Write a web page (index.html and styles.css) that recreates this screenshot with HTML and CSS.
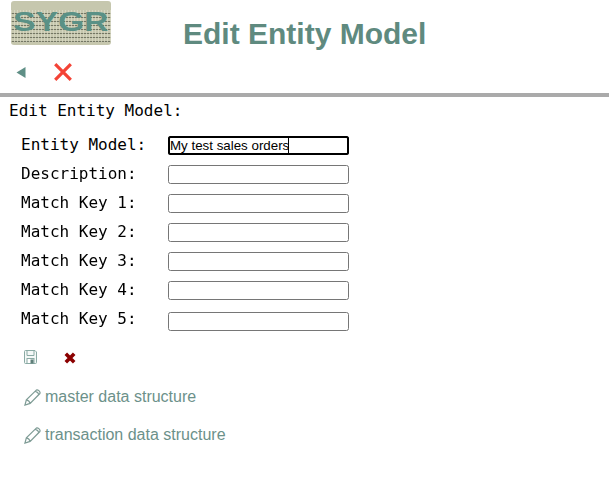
FILE: index.html
```html
<!DOCTYPE html>
<html lang="en">
<head>
<meta charset="utf-8">
<title>Edit Entity Model</title>
<link rel="stylesheet" href="styles.css">
</head>
<body>
<header class="header">
  <div class="logo"><span class="logo-text">SYGR</span></div>
  <h1 class="title">Edit Entity Model</h1>
</header>
<nav class="toolbar">
  <svg class="icon-back" width="10" height="11" viewBox="0 0 10 11"><path d="M9.5 0V11L0.5 5.5Z" fill="#5f8f86"/></svg>
  <svg class="icon-close" width="20" height="20" viewBox="0 0 20 20"><path d="M2.2 2.2L17.8 17.8M17.8 2.2L2.2 17.8" stroke="#f44336" stroke-width="3.2" fill="none"/></svg>
</nav>
<div class="rule"></div>
<main class="content">
  <div class="heading">Edit Entity Model:</div>
  <form class="form">
    <label class="label" for="f0">Entity Model:</label><input class="field field-active" id="f0" type="text" value="My test sales orders" autofocus>
    <label class="label" for="f1">Description:</label><input class="field" id="f1" type="text">
    <label class="label" for="f2">Match Key 1:</label><input class="field" id="f2" type="text">
    <label class="label" for="f3">Match Key 2:</label><input class="field" id="f3" type="text">
    <label class="label" for="f4">Match Key 3:</label><input class="field" id="f4" type="text">
    <label class="label" for="f5">Match Key 4:</label><input class="field" id="f5" type="text">
    <label class="label" for="f6">Match Key 5:</label><input class="field field-last" id="f6" type="text">
  </form>
  <div class="actions">
    <svg width="13" height="14" viewBox="0 0 13 14"><path d="M1.5 0.5H11L12.5 2V12.5Q12.5 13.5 11.5 13.5H1.5Q0.5 13.5 0.5 12.5V1.5Q0.5 0.5 1.5 0.5Z" fill="#f4f8f7" stroke="#8aaaa4"/><path d="M3 1V5.5H10V1" fill="none" stroke="#8aaaa4"/><rect x="3" y="8.5" width="7" height="5" fill="#fff" stroke="#8aaaa4"/><rect x="6.5" y="9.5" width="3" height="4" fill="#5f7f79"/></svg>
    <svg class="icon-cancel" width="12" height="12" viewBox="0 0 12 12"><path d="M1.8 1.8L10.2 10.2M10.2 1.8L1.8 10.2" stroke="#8b0000" stroke-width="3.6" fill="none"/></svg>
  </div>
  <a class="link link-first" href="#"><svg width="17" height="17" viewBox="0 0 18 18"><path d="M1 17L2.5 11.5L13 1.2Q14.2 0.5 16 2Q17.5 3.6 16.8 4.8L6.5 15.2Z M2.5 11.5Q5.5 12 6.5 15.2 M12 2.6Q15 3.2 15.7 6" fill="none" stroke="#7f9c96" stroke-width="1.3"/></svg>master data structure</a>
  <a class="link" href="#"><svg width="17" height="17" viewBox="0 0 18 18"><path d="M1 17L2.5 11.5L13 1.2Q14.2 0.5 16 2Q17.5 3.6 16.8 4.8L6.5 15.2Z M2.5 11.5Q5.5 12 6.5 15.2 M12 2.6Q15 3.2 15.7 6" fill="none" stroke="#7f9c96" stroke-width="1.3"/></svg>transaction data structure</a>
</main>
</body>
</html>
```
FILE: styles.css
```css
html, body { margin: 0; padding: 0; background: #fff; }
body { width: 609px; height: 483px; overflow: hidden; font-family: "Liberation Sans", sans-serif; }

.header { display: flex; align-items: flex-start; height: 54px; padding: 1px 0 0 11px; box-sizing: border-box; }
.logo {
  width: 100px; height: 44px; border-radius: 3px; box-sizing: border-box; display: flex; align-items: center; justify-content: center;
  background-color: #c6c7ae;
  background-image:
    repeating-linear-gradient(90deg, rgba(220,220,200,.7) 0 1px, transparent 1px 3px),
    repeating-linear-gradient(0deg, rgba(60,65,50,.6) 0 1px, transparent 1px 4px);
  background-size: 100% 32px;
  background-position: 0 9px;
  background-repeat: no-repeat;
}
.logo-text { font-size: 28px; font-weight: bold; color: #5a9186; transform: scaleX(1.2); line-height: 1; position: relative; top: -1px; }
.title { margin: 16px 0 0 72px; font-size: 30px; line-height: 33px; font-weight: bold; color: #5f8a7f; }

.toolbar { display: flex; align-items: center; height: 39px; padding: 0 0 3px 16px; box-sizing: border-box; }
.icon-back { margin-right: 27px; }

.rule { height: 4px; background: #aaa; }

.content { padding: 4px 0 0 9px; }
.heading { font: 16px/19px "DejaVu Sans Mono", monospace; color: #000; }
.form { display: grid; grid-template-columns: 147px 181px; grid-auto-rows: 19px; row-gap: 10px; margin: 16px 0 0 12px; align-items: center; }
.label { font: 16px/19px "DejaVu Sans Mono", monospace; color: #000; position: relative; top: -1px; }
.field {
  width: 181px; height: 19px; box-sizing: border-box; margin: 0; padding: 1px;
  border: 1px solid #767676; border-radius: 2.5px; background: #fff;
  font: 13.333px "Liberation Sans", sans-serif; color: #000;
}
.field:focus { outline: 2px solid #000; outline-offset: -2px; }
.field-active { background: #fff linear-gradient(#000, #000) no-repeat 119px 0 / 1px 100%; }
.field-last { align-self: start; margin-top: 2px; }

.actions { display: flex; align-items: center; gap: 27px; margin: 21px 0 0 15px; height: 14px; }
.icon-cancel { margin-top: 2px; }

.link { display: flex; align-items: center; gap: 4px; height: 20px; margin: 18px 0 0 15px; font-size: 16px; color: #6c918a; text-decoration: none; }
.link-first { margin-top: 23px; }
```
